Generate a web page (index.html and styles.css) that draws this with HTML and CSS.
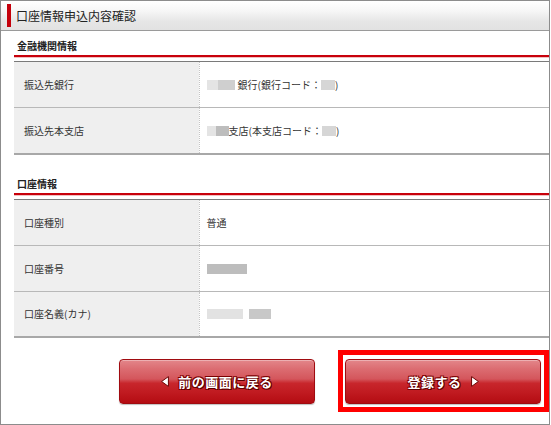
FILE: index.html
```html
<!DOCTYPE html>
<html lang="ja">
<head>
<meta charset="utf-8">
<title>口座情報申込内容確認</title>
<link rel="stylesheet" href="styles.css">
</head>
<body>
<div class="page">
  <header class="title-bar">
    <span class="title-mark"></span>
    <h1 class="title">口座情報申込内容確認</h1>
  </header>

  <section class="section">
    <h2 class="section-title">金融機関情報</h2>
    <table class="info">
      <tr>
        <th class="label">振込先銀行</th>
        <td class="value"><span class="mask mask-a"></span><span class="mask mask-b"></span>銀行(銀行コード：<span class="mask mask-code"></span>)</td>
      </tr>
      <tr>
        <th class="label">振込先本支店</th>
        <td class="value"><span class="mask mask-c"></span><span class="mask mask-d"></span>支店(本支店コード：<span class="mask mask-code2"></span>)</td>
      </tr>
    </table>
  </section>

  <section class="section section-next">
    <h2 class="section-title">口座情報</h2>
    <table class="info">
      <tr>
        <th class="label">口座種別</th>
        <td class="value">普通</td>
      </tr>
      <tr>
        <th class="label">口座番号</th>
        <td class="value"><span class="mask mask-number"></span></td>
      </tr>
      <tr>
        <th class="label">口座名義(カナ)</th>
        <td class="value"><span class="mask mask-name1"></span><span class="mask mask-name2"></span></td>
      </tr>
    </table>
  </section>

  <div class="actions">
    <button class="btn" type="button">
      <svg class="arrow" width="8" height="11" viewBox="0 0 8 11"><polygon points="7.4,0.6 7.4,10.4 0.6,5.5" fill="#fff" stroke="#6a0000" stroke-width="1" stroke-linejoin="round"/></svg>
      <span>前の画面に戻る</span>
    </button>
    <div class="highlight">
      <button class="btn" type="button">
        <span>登録する</span>
        <svg class="arrow" width="8" height="11" viewBox="0 0 8 11"><polygon points="0.6,0.6 0.6,10.4 7.4,5.5" fill="#fff" stroke="#6a0000" stroke-width="1" stroke-linejoin="round"/></svg>
      </button>
    </div>
  </div>
</div>
</body>
</html>
```

FILE: styles.css
```css
* {
  box-sizing: border-box;
}

body {
  margin: 0;
  background: #fff;
  font-family: "Noto Sans CJK JP", "Liberation Sans", sans-serif;
  color: #333;
}

.page {
  width: 550px;
  height: 425px;
  border: 1px solid #8c8c8c;
  display: flex;
  flex-direction: column;
}

.title-bar {
  height: 30px;
  display: flex;
  align-items: center;
  gap: 5px;
  padding-left: 6px;
  background: linear-gradient(to bottom, #ffffff 0%, #f6f6f6 35%, #e6e6e6 70%, #e2e2e2 100%);
  border-bottom: 1px solid #9a9a9a;
}

.title-mark {
  width: 4px;
  height: 23px;
  background: #c4000b;
}

.title {
  margin: 0;
  font-size: 12px;
  font-weight: normal;
  color: #222;
  line-height: 16px;
}

.section {
  margin-left: 13px;
}

.section-next {
  margin-top: 14px;
}

.section-title {
  margin: 0;
  padding: 8px 0 2px 3px;
  font-size: 10px;
  line-height: 14px;
  font-weight: bold;
  color: #222;
  border-bottom: 2px solid #c8000b;
  box-shadow: 0 1px 0 #f2c0c0;
}

.info {
  width: 100%;
  margin-top: 4px;
  border-collapse: collapse;
  border-top: 1px solid #7a7a7a;
  border-bottom: 2px solid #a8a8a8;
  font-size: 10px;
}

.info tr + tr {
  border-top: 1px solid #b8b8b8;
}

.label {
  width: 185px;
  height: 46px;
  padding: 0 0 0 10px;
  text-align: left;
  font-weight: normal;
  color: #333;
  background: #efefef;
  border-right: 1px dotted #c4c4c4;
}

.value {
  height: 46px;
  padding: 0 0 0 7px;
  color: #333;
  background: #fff;
}

.mask {
  display: inline-block;
  height: 10px;
  vertical-align: -1px;
  filter: blur(0.7px);
}

.mask-a {
  width: 11px;
  background: #e4e4e4;
}

.mask-b {
  width: 17px;
  margin-right: 3px;
  background: #cfcfcf;
}

.mask-c {
  width: 9px;
  background: #e4e4e4;
}

.mask-d {
  width: 13px;
  background: #bdbdbd;
}

.mask-code,
.mask-code2 {
  width: 14px;
  background: #d6d6d6;
}

.mask-number {
  width: 40px;
  background: #bdbdbd;
}

.mask-name1 {
  width: 36px;
  margin-right: 6px;
  background: #e2e2e2;
}

.mask-name2 {
  width: 22px;
  background: #c8c8c8;
}

.actions {
  display: flex;
  justify-content: flex-end;
  align-items: center;
  gap: 23px;
  padding-top: 12px;
}

.highlight {
  border: 5px solid #ff0000;
  padding: 4px 3px 3px 2px;
}

.btn {
  width: 196px;
  height: 45px;
  display: flex;
  align-items: center;
  justify-content: center;
  gap: 9px;
  padding: 0;
  border: 1px solid #a00b10;
  border-radius: 4px;
  background: linear-gradient(to bottom, #e3868a 0%, #db6b70 22%, #d4565c 44%, #c8262c 54%, #c01a20 76%, #b40c12 100%);
  box-shadow: inset 0 1px 0 rgba(255, 255, 255, 0.35), 0 1px 1px rgba(0, 0, 0, 0.25);
  color: #fff;
  font-family: "Noto Sans CJK JP", "Liberation Sans", sans-serif;
  font-size: 13px;
  font-weight: bold;
  letter-spacing: 0.5px;
  text-shadow: 1px 1px 0 #5a0000, -1px -1px 0 #7a0000, 1px -1px 0 #7a0000, -1px 1px 0 #7a0000;
}

.arrow {
  display: block;
  flex: none;
}
```
